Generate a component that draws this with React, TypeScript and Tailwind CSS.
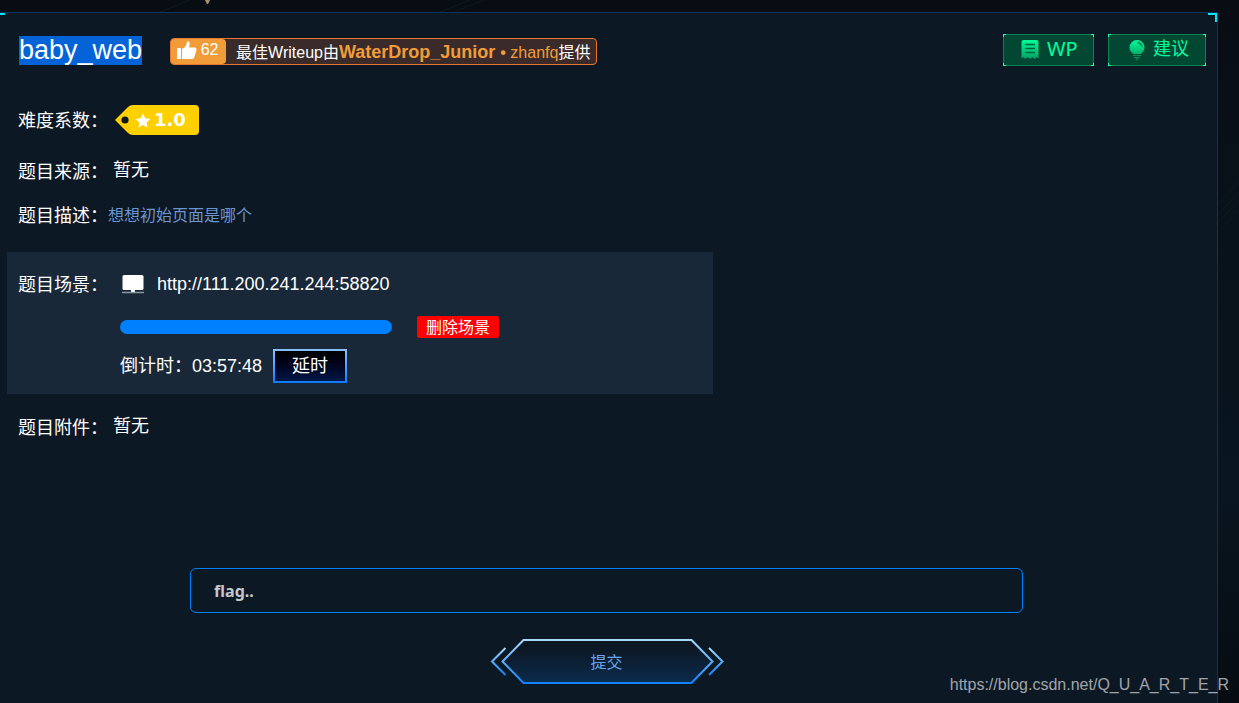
import React, { useState } from 'react';

const Backdrop: React.FC = () => (
  <svg className="absolute inset-0 h-full w-full" aria-hidden="true">
    <defs>
      <linearGradient id="night" x1="0" y1="0" x2="0" y2="1">
        <stop offset="0" stopColor="#080d14" />
        <stop offset="0.35" stopColor="#08121a" />
        <stop offset="0.7" stopColor="#09151f" />
        <stop offset="1" stopColor="#060c12" />
      </linearGradient>
    </defs>
    <rect width="100%" height="100%" fill="url(#night)" />
    <path d="M440 12l30-12M454 12l30-12M160 12l30-12M1217 206l22-24M1217 216l22-24M1217 224l22-24M1220 230l19-20" stroke="#0c1a21" fill="none" />
    <path d="M205 0h5l-2 4h-1z" fill="#a6956a" />
  </svg>
);

const ThumbIcon: React.FC = () => (
  <svg width="20" height="18" viewBox="0 0 20 18" fill="#fff" aria-hidden="true">
    <path d="M0 7h4v11H0z" />
    <path d="M5 8l2.500-1.500 2-3 .3-2.500C10-.3 12.800-.1 12.700 3L12 6.500h5.500c2 0 2.400 1.500 1.800 3.300l-2 6.400c-.4 1.200-1 1.800-2.300 1.800H5z" />
  </svg>
);

const NoteIcon: React.FC = () => (
  <svg width="18" height="20" viewBox="0 0 18 20" aria-hidden="true">
    <defs>
      <linearGradient id="note" x1="0" y1="0" x2="0" y2="1">
        <stop offset="0" stopColor="#00fb9a" />
        <stop offset="1" stopColor="#00a265" />
      </linearGradient>
    </defs>
    <path d="M.5 2q0-2 2-2h13q2 0 2 2v16.500l-2-1.500-2 2-2.200-2L9 19l-2.300-2-2.200 2-2-2-2 1.500z" fill="url(#note)" />
    <path d="M4 4.500h10M4 8.500h10M4 12.500h10" stroke="#00663f" strokeWidth="1.300" />
  </svg>
);

const BulbIcon: React.FC = () => (
  <svg width="16" height="20" viewBox="0 0 16 20" aria-hidden="true">
    <defs>
      <linearGradient id="bulb" x1="0" y1="0" x2="0" y2="1">
        <stop offset="0" stopColor="#00fb9a" />
        <stop offset="1" stopColor="#00b26e" />
      </linearGradient>
    </defs>
    <path d="M8 0a7.500 7.500 0 0 1 7.500 7.500c0 3-2 4.500-3.500 6.500H4C2.500 12 .5 10.500.5 7.500A7.500 7.500 0 0 1 8 0z" fill="url(#bulb)" />
    <path d="M8.500 2.500q4 .5 4.500 4.500" stroke="#00794c" strokeWidth="1.300" fill="none" />
    <path d="M4 15.500h8M5 17.500h6M6.500 19.200h3" stroke="#009159" strokeWidth="1.200" />
  </svg>
);

const MonitorIcon: React.FC = () => (
  <svg width="22" height="20" viewBox="0 0 22 20" aria-hidden="true">
    <rect x="0.500" y="1" width="21" height="15" rx="1.500" fill="#fff" />
    <path d="M9 16h4v2H9z" fill="#fff" />
    <path d="M0 18.500h22" stroke="#8d97a1" strokeWidth="1.500" />
  </svg>
);

const DifficultyTag: React.FC<{ value: string }> = ({ value }) => (
  <span className="relative flex h-[30px] w-[84px] items-center pl-[39px] font-['DejaVu_Sans',sans-serif] text-lg font-bold text-white">
    <svg className="absolute inset-0" width="84" height="30" viewBox="0 0 84 30" aria-hidden="true">
      <path d="M0 15L13 2Q15 0 18 0H80Q84 0 84 4V26Q84 30 80 30H18Q15 30 13 28Z" fill="#ffd000" />
      <circle cx="10" cy="15" r="3.600" fill="#0d1825" />
      <path d="M28 8.500l2.200 4.800 5.300.6-3.900 3.500 1 5.100L28 19.900l-4.600 2.600 1-5.100-3.900-3.500 5.300-.6z" fill="#fff" />
    </svg>
    <span className="relative">{value}</span>
  </span>
);

const ActionButton: React.FC<{ icon: React.ReactNode; label: string; className: string }> = ({ icon, label, className }) => (
  <button className={`relative flex h-8 items-center gap-2 border border-[#078253] bg-[#024731] text-[#00ffa2] ${className}`}>
    <svg className="absolute -inset-px h-8 w-[calc(100%+2px)]" aria-hidden="true">
      <g fill="#1effb0">
        <rect width="3" height="1" />
        <rect width="1" height="3" />
        <rect y="31" width="3" height="1" />
        <rect y="29" width="1" height="3" />
        <svg x="100%" overflow="visible">
          <rect x="-3" width="3" height="1" />
          <rect x="-1" width="1" height="3" />
          <rect x="-3" y="31" width="3" height="1" />
          <rect x="-1" y="29" width="1" height="3" />
        </svg>
      </g>
    </svg>
    {icon}
    <span className="pb-0.5">{label}</span>
  </button>
);

const InfoRow: React.FC<{ label: string; className?: string; children: React.ReactNode }> = ({ label, className = '', children }) => (
  <div className={`flex h-11 items-center pl-[18px] ${className}`}>
    <span className="w-[90px] shrink-0 whitespace-nowrap pt-0.5">{label}</span>
    {children}
  </div>
);

const SubmitShape: React.FC = () => (
  <svg className="absolute inset-0" width="234" height="46" viewBox="0 0 234 46" fill="none" aria-hidden="true">
    <defs>
      <linearGradient id="edge" gradientUnits="userSpaceOnUse" x1="0" y1="0" x2="0" y2="46">
        <stop offset="0" stopColor="#aadcf8" />
        <stop offset="1" stopColor="#0a80ff" />
      </linearGradient>
      <linearGradient id="chevron" gradientUnits="userSpaceOnUse" x1="0" y1="8" x2="0" y2="37">
        <stop offset="0" stopColor="#aadcf8" />
        <stop offset="1" stopColor="#0a80ff" />
      </linearGradient>
      <linearGradient id="fill" x1="0" y1="0" x2="0" y2="1">
        <stop offset="0.2" stopColor="#0d1825" />
        <stop offset="1" stopColor="#0b2b4d" />
      </linearGradient>
    </defs>
    <path d="M12.500 22.500L33.500 1H201.500L222.500 22.500L201.500 44H33.500Z" fill="url(#fill)" stroke="url(#edge)" strokeWidth="2" />
    <path d="M15.500 9L2 22.500L15.500 36M219 9L232.500 22.500L219 36" stroke="url(#chevron)" strokeWidth="2" />
  </svg>
);

export default function App() {
  const [flag, setFlag] = useState('');

  return (
    <div className="relative flex min-h-screen flex-col overflow-hidden bg-[#080d14] pr-[21px] pt-3 font-['Liberation_Sans','Noto_Sans_CJK_SC',sans-serif] text-lg text-white">
      <Backdrop />

      <main className="relative flex-1 border-r border-t border-[#0b3258] bg-[#0d1825]">
        <span className="absolute left-0 top-0 h-0.5 w-[5px] bg-[#00e4ff]" />
        <span className="absolute right-0 top-0 h-[9px] w-[9px] border-r-2 border-t-2 border-[#00e4ff]" />

        <header className="flex items-center pl-[19px] pr-[11px] pt-[21px]">
          <h1 className="bg-[#0563d8] text-[27px] leading-[29px]">baby_web</h1>
          <div className="ml-7 mt-0.5 flex h-[27px] items-stretch overflow-hidden whitespace-nowrap rounded border border-[#e87530] bg-[#3a2b2a] pr-1.5 text-base">
            <span className="mr-2.5 flex w-[55px] items-center justify-center gap-1 rounded-r bg-[#f19c38] pb-0.5 pr-0.5">
              <ThumbIcon /> 62
            </span>
            <p className="leading-7">
              最佳Writeup由<b className="text-lg leading-none text-[#f19c38]">WaterDrop_Junior </b>
              <span className="text-[#f19c38]"><b>•</b> zhanfq</span>提供
            </p>
          </div>
          <div className="ml-auto flex gap-3.5">
            <ActionButton icon={<NoteIcon />} label="WP" className="w-[91px] pl-[17px] font-['Noto_Sans',sans-serif] text-xl" />
            <ActionButton icon={<BulbIcon />} label="建议" className="w-[98px] pl-5" />
          </div>
        </header>

        <InfoRow label="难度系数：" className="mt-8">
          <span className="ml-[7px]"><DifficultyTag value="1.0" /></span>
        </InfoRow>
        <InfoRow label="题目来源：" className="mt-[7px]">
          <span className="ml-[5px] pb-0.5">暂无</span>
        </InfoRow>
        <InfoRow label="题目描述：">
          <span className="pt-0.5 text-base text-[#6b95ce]">想想初始页面是哪个</span>
        </InfoRow>

        <section className="ml-[7px] mt-[15px] w-[58%] bg-[#182838] pb-[11px] pt-2.5">
          <div className="flex h-11 items-center pl-[11px]">
            <span className="w-[104px] shrink-0 pt-0.5">题目场景：</span>
            <MonitorIcon />
            <span className="ml-[13px]">http://111.200.241.244:58820</span>
          </div>
          <div className="mt-2.5 flex h-[22px] items-center pl-[113px]">
            <div className="h-3.5 w-[272px] rounded-full bg-[#0080ff]" />
            <button className="ml-[25px] h-[22px] rounded-xs bg-[#ff0000] px-[9px] text-base leading-6">删除场景</button>
          </div>
          <div className="mt-[11px] flex items-center pl-[113px]">
            <span>倒计时：03:57:48</span>
            <button className="ml-[11px] bg-linear-to-b from-[#89c1ff] to-[#0879ff] p-0.5">
              <span className="flex h-[30px] w-[70px] items-center justify-center bg-linear-to-b from-[#000003] to-[#001848]">延时</span>
            </button>
          </div>
        </section>

        <InfoRow label="题目附件：" className="mt-[11px]">
          <span className="ml-[5px] pb-0.5">暂无</span>
        </InfoRow>

        <form className="mt-[119px] flex flex-col items-center pb-[19px] pr-1" onSubmit={(e) => e.preventDefault()}>
          <input
            type="text"
            aria-label="flag"
            placeholder="flag.."
            value={flag}
            onChange={(e) => setFlag(e.target.value)}
            className="h-[45px] w-[833px] max-w-full rounded-md border border-[#0080ff] px-[23px] font-['Noto_Sans',sans-serif] text-base font-bold outline-none placeholder:text-[#c4c7cc]"
          />
          <button type="submit" className="relative mt-[26px] h-[45px] w-[234px] pt-0.5 text-base text-[#69a7ee]">
            <SubmitShape />
            <span className="relative">提交</span>
          </button>
        </form>
      </main>

      <p className="absolute bottom-1.5 right-2.5 text-base leading-6 text-[#a0a5aa]">https://blog.csdn.net/Q_U_A_R_T_E_R</p>
    </div>
  );
}
